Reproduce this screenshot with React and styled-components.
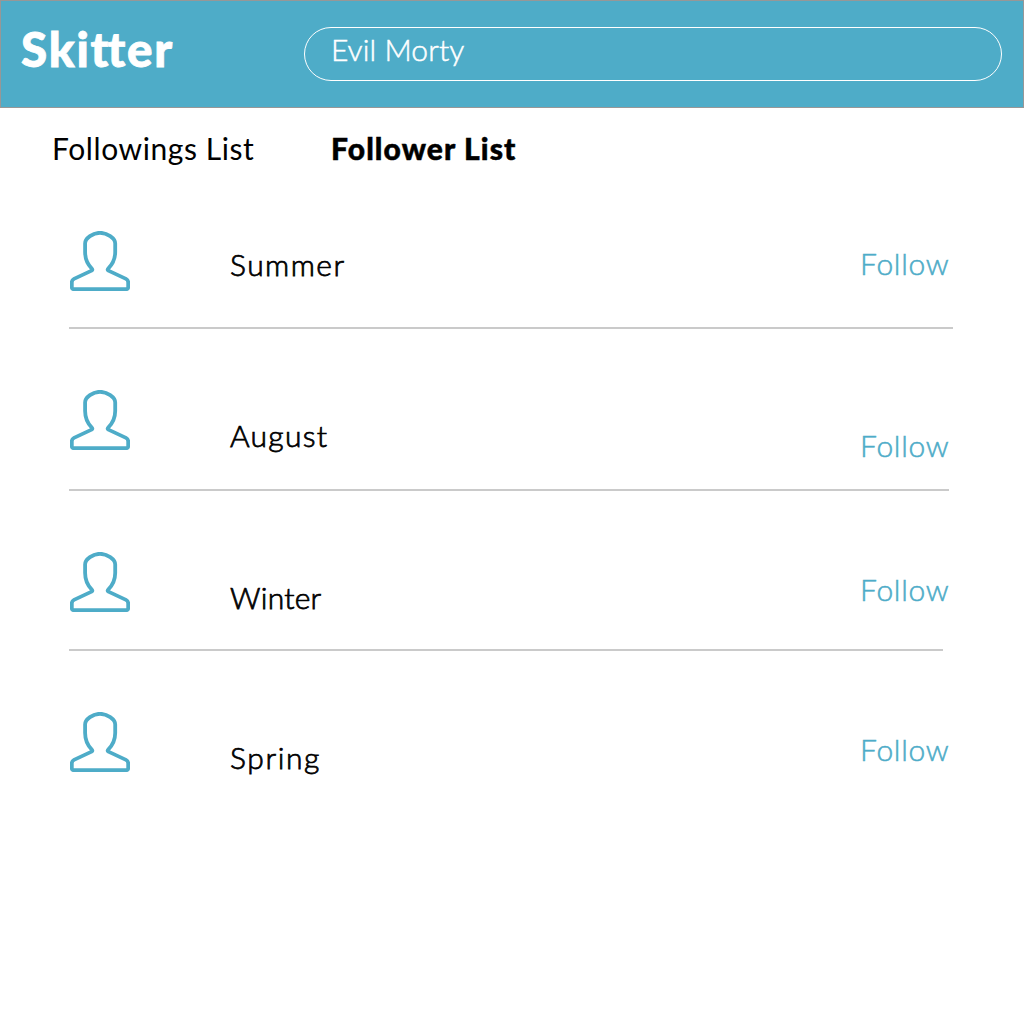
import React from "react";
import styled, { createGlobalStyle } from "styled-components";

const GlobalStyle = createGlobalStyle`
  * { box-sizing: border-box; }
  body {
    margin: 0;
    background: #fff;
    font-family: Lato, "Open Sans", sans-serif;
    color: #000;
  }
`;

const Page = styled.div`
  width: 1024px;
  height: 1024px;
  display: flex;
  flex-direction: column;
  background: #fff;
`;

const Header = styled.header`
  display: flex;
  align-items: flex-start;
  height: 108px;
  padding: 26px 21px 0 19px;
  background: #4eacc8;
  border: 1px solid #979797;
`;

const Logo = styled.h1`
  margin: -8px 0 0;
  padding-left: 1px;
  width: 284px;
  font-size: 47.5px;
  font-weight: 900;
  line-height: 59px;
  letter-spacing: 1.8px;
  color: #fff;
  -webkit-text-stroke: 0.8px;
`;

const Joined = styled.span`
  letter-spacing: -1px;
`;

const SearchBox = styled.div`
  flex: 1;
  height: 54px;
  padding: 1px 26px;
  border: 1px solid #fff;
  border-radius: 27px;
  font-size: 30px;
  font-weight: 300;
  line-height: 40px;
  letter-spacing: 0.1px;
  color: #fff;
  -webkit-text-stroke: 0.5px;
`;

const Tabs = styled.nav`
  display: flex;
  height: 80px;
  padding: 20px 0 0 52px;
`;

const Tab = styled.span`
  width: ${(p) => p.$width}px;
  font-size: 30px;
  line-height: 40px;
  white-space: nowrap;
  font-weight: ${(p) => (p.$active ? 900 : 400)};
  letter-spacing: ${(p) => p.$tracking}px;
  -webkit-text-stroke: ${(p) => (p.$active ? "0.5px" : "0")};
`;

const List = styled.ul`
  margin: 0;
  padding: 0 0 0 69px;
  list-style: none;
`;

const Row = styled.li`
  display: grid;
  grid-template-columns: 160px 631px auto;
  align-items: start;
  width: ${(p) => p.$width}px;
  height: ${(p) => p.$height}px;
  border-bottom: ${(p) => (p.$last ? "none" : "2px solid #cacaca")};
`;

const Avatar = styled.svg`
  display: block;
  width: 60px;
  height: 60px;
  margin: ${(p) => p.$top}px 0 0 1px;
`;

const Name = styled.span`
  margin-top: ${(p) => p.$top}px;
  padding-left: 1px;
  font-size: 30px;
  font-weight: 300;
  line-height: 40px;
  letter-spacing: ${(p) => p.$tracking}px;
  -webkit-text-stroke: 0.75px;
`;

const FollowLink = styled.a`
  margin-top: ${(p) => p.$top}px;
  width: 90px;
  font-size: 30px;
  font-weight: 300;
  line-height: 40px;
  letter-spacing: 0.7px;
  white-space: nowrap;
  color: #4eacc8;
  -webkit-text-stroke: 0.5px;
`;

const people = [
  { name: "Summer", width: 884, height: 141, avatar: 43, label: 56, follow: 55, tracking: 1.45 },
  { name: "August", width: 880, height: 162, avatar: 61, label: 86, follow: 96, tracking: 1.3 },
  { name: "Winter", width: 874, height: 160, avatar: 61, label: 86, follow: 78, tracking: 0.25 },
  { name: "Spring", width: 880, height: 160, avatar: 61, label: 86, follow: 78, tracking: 1.6 },
];

function PersonIcon({ top }) {
  return (
    <Avatar $top={top} viewBox="0 0 60 60" fill="none" stroke="#4eacc8" strokeWidth="3.8" strokeLinejoin="round">
      <path d="M30 1.8C23 1.8 15.1 7.2 15.1 12.5V21C15.1 29 18.2 34 21.8 37.6Q23 38.8 21.6 39.6L4 47.9Q1.8 49 1.8 51.5V56.2Q1.8 58.2 3.8 58.2H56.2Q58.2 58.2 58.2 56.2V51.5Q58.2 49 56 47.9L38.4 39.6Q37 38.8 38.2 37.6C41.8 34 45.2 29 45.2 21V12.5C45.2 7.2 37 1.8 30 1.8Z" />
    </Avatar>
  );
}

export default function App() {
  return (
    <>
      <GlobalStyle />
      <Page>
        <Header>
          <Logo>Ski<Joined>t</Joined>ter</Logo>
          <SearchBox>Evil Morty</SearchBox>
        </Header>
        <Tabs>
          <Tab $width={279} $tracking={0.58}>Followings List</Tab>
          <Tab $width={200} $tracking={1.1} $active>Follower List</Tab>
        </Tabs>
        <List>
          {people.map((p, i) => (
            <Row key={p.name} $width={p.width} $height={p.height} $last={i === people.length - 1}>
              <PersonIcon top={p.avatar} />
              <Name $top={p.label} $tracking={p.tracking}>{p.name}</Name>
              <FollowLink $top={p.follow}>Follow</FollowLink>
            </Row>
          ))}
        </List>
      </Page>
    </>
  );
}
